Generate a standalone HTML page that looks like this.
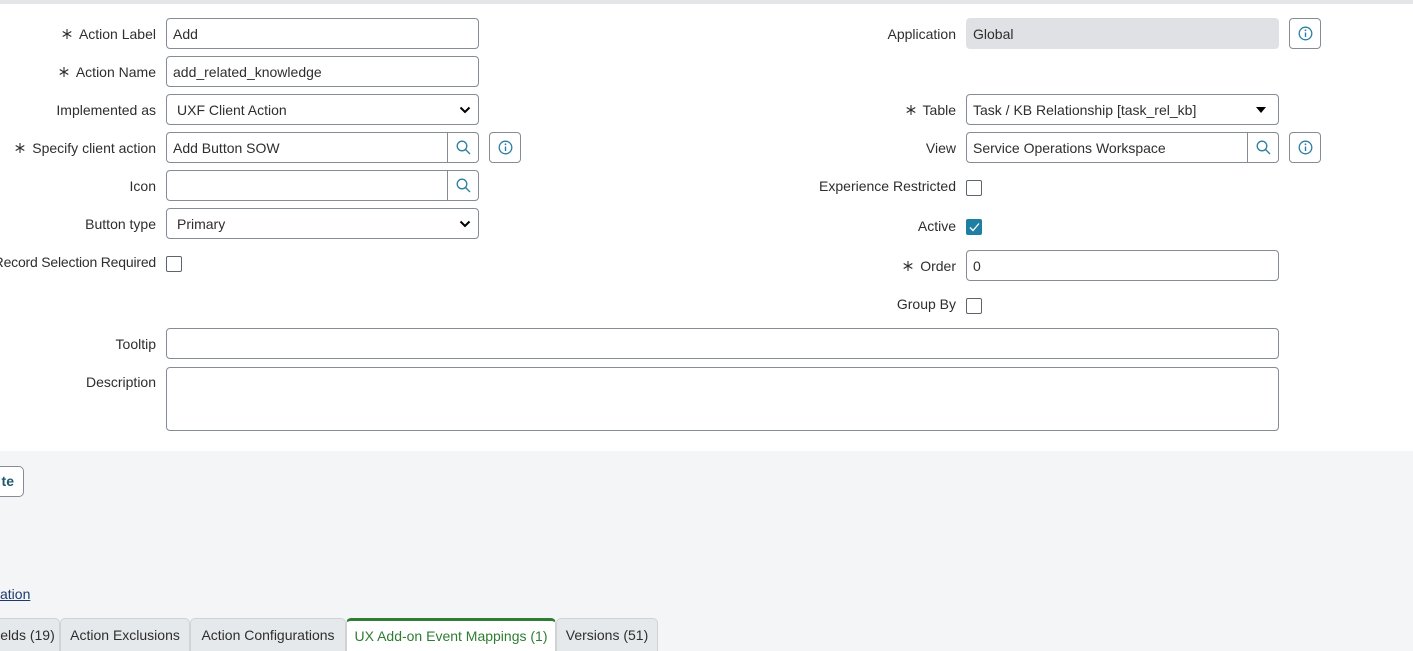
<!DOCTYPE html>
<html><head><style>
*{box-sizing:border-box;margin:0;padding:0}
body{width:1413px;height:651px;overflow:hidden;position:relative;background:#fff;font-family:"Liberation Sans",sans-serif;font-size:14px;color:#2e2e2e}
.top{position:absolute;left:0;top:0;width:1413px;height:4px;background:#e4e6e7}
.gray{position:absolute;left:0;top:451px;width:1413px;height:200px;background:#f4f5f7}
.lbl{position:absolute;text-align:right;white-space:nowrap;line-height:16px}
.lbl svg{margin-right:6px;vertical-align:-1px}
.in{position:absolute;height:31px;border:1px solid #868c94;border-radius:4px;background:#fff;padding:0 6px;line-height:30px;white-space:nowrap}
.ro{background:#dfe1e4;border-color:#dfe1e4}
.srch{position:absolute;top:0;right:0;width:31px;height:29px;border-left:1px solid #868c94}
.ib{position:absolute;width:32px;height:31px;border:1px solid #868c94;border-radius:4px;background:#fff}
.cb{position:absolute;width:16px;height:16px;border:1px solid #5f656d;border-radius:2px;background:#fff}
.tab{position:absolute;top:618px;height:33px;border:1px solid #cfd3d6;border-bottom:none;border-radius:5px 5px 0 0;background:#e6e9eb;line-height:32px;text-align:center;white-space:nowrap}
</style></head><body>
<svg width="0" height="0" style="position:absolute"><defs><symbol id="ast" viewBox="0 0 12 12"><path d="M6 1v10M1.7 3.5l8.6 5M1.7 8.5l8.6-5" stroke="#2e2e2e" stroke-width="1.1" fill="none"/></symbol></defs></svg>
<div class="top"></div>
<div class="gray"></div>

<div class="lbl" style="right:1257px;top:26px"><svg width="12" height="12"><use href="#ast"/></svg>Action Label</div>
<div class="in" style="left:166px;top:18px;width:313px">Add</div>
<div class="lbl" style="right:1257px;top:64px"><svg width="12" height="12"><use href="#ast"/></svg>Action Name</div>
<div class="in" style="left:166px;top:56px;width:313px">add_related_knowledge</div>
<div class="lbl" style="right:1257px;top:102px">Implemented as</div>
<div class="in" style="left:166px;top:94px;width:313px;padding-left:10px">UXF Client Action<svg style="position:absolute;right:7px;top:11px" width="12" height="8" viewBox="0 0 12 8"><path d="M1.5 1.5 6 6 10.5 1.5" fill="none" stroke="#000" stroke-width="2"/></svg></div>
<div class="lbl" style="right:1257px;top:140px"><svg width="12" height="12"><use href="#ast"/></svg>Specify client action</div>
<div class="in" style="left:166px;top:132px;width:313px">Add Button SOW<div class="srch"><svg style="position:absolute;left:8px;top:7px" width="15" height="15" viewBox="0 0 15 15"><circle cx="6" cy="6" r="4.8" fill="none" stroke="#2b7fa0" stroke-width="1.3"/><path d="M9.5 9.5 14 14" stroke="#2b7fa0" stroke-width="1.3"/></svg></div></div>
<div class="ib" style="left:489px;top:132px"><svg style="position:absolute;left:8px;top:7px" width="15" height="15" viewBox="0 0 15 15"><circle cx="7.5" cy="7.5" r="6.3" fill="none" stroke="#2b7fa0" stroke-width="1.3"/><path d="M7.5 6.5v4.5" stroke="#2b7fa0" stroke-width="1.4"/><circle cx="7.5" cy="4.3" r=".9" fill="#2b7fa0"/></svg></div>
<div class="lbl" style="right:1257px;top:178px">Icon</div>
<div class="in" style="left:166px;top:170px;width:313px"><div class="srch"><svg style="position:absolute;left:8px;top:7px" width="15" height="15" viewBox="0 0 15 15"><circle cx="6" cy="6" r="4.8" fill="none" stroke="#2b7fa0" stroke-width="1.3"/><path d="M9.5 9.5 14 14" stroke="#2b7fa0" stroke-width="1.3"/></svg></div></div>
<div class="lbl" style="right:1257px;top:216px">Button type</div>
<div class="in" style="left:166px;top:208px;width:313px;padding-left:10px">Primary<svg style="position:absolute;right:7px;top:11px" width="12" height="8" viewBox="0 0 12 8"><path d="M1.5 1.5 6 6 10.5 1.5" fill="none" stroke="#000" stroke-width="2"/></svg></div>
<div class="lbl" style="right:1257px;top:254px;letter-spacing:-0.2px">Record Selection Required</div>
<div class="cb" style="left:166px;top:256px"></div>

<div class="lbl" style="right:457px;top:26px">Application</div>
<div class="in ro" style="left:966px;top:18px;width:313px">Global</div>
<div class="ib" style="left:1289px;top:18px"><svg style="position:absolute;left:8px;top:7px" width="15" height="15" viewBox="0 0 15 15"><circle cx="7.5" cy="7.5" r="6.3" fill="none" stroke="#2b7fa0" stroke-width="1.3"/><path d="M7.5 6.5v4.5" stroke="#2b7fa0" stroke-width="1.4"/><circle cx="7.5" cy="4.3" r=".9" fill="#2b7fa0"/></svg></div>
<div class="lbl" style="right:457px;top:102px"><svg width="12" height="12"><use href="#ast"/></svg>Table</div>
<div class="in" style="left:966px;top:94px;width:313px">Task / KB Relationship [task_rel_kb]<svg style="position:absolute;right:12px;top:12px" width="10" height="6" viewBox="0 0 10 6"><path d="M0 0h10L5 6z" fill="#000"/></svg></div>
<div class="lbl" style="right:457px;top:140px">View</div>
<div class="in" style="left:966px;top:132px;width:313px">Service Operations Workspace<div class="srch"><svg style="position:absolute;left:8px;top:7px" width="15" height="15" viewBox="0 0 15 15"><circle cx="6" cy="6" r="4.8" fill="none" stroke="#2b7fa0" stroke-width="1.3"/><path d="M9.5 9.5 14 14" stroke="#2b7fa0" stroke-width="1.3"/></svg></div></div>
<div class="ib" style="left:1289px;top:132px"><svg style="position:absolute;left:8px;top:7px" width="15" height="15" viewBox="0 0 15 15"><circle cx="7.5" cy="7.5" r="6.3" fill="none" stroke="#2b7fa0" stroke-width="1.3"/><path d="M7.5 6.5v4.5" stroke="#2b7fa0" stroke-width="1.4"/><circle cx="7.5" cy="4.3" r=".9" fill="#2b7fa0"/></svg></div>
<div class="lbl" style="right:457px;top:178px">Experience Restricted</div>
<div class="cb" style="left:966px;top:180px"></div>
<div class="lbl" style="right:457px;top:218px">Active</div>
<div class="cb" style="left:966px;top:219px;background:#1f7fa3;border-color:#1f7fa3"><svg style="position:absolute;left:2px;top:2px" width="11" height="10" viewBox="0 0 11 10"><path d="M1 5.5 4 8.5 10 1.5" fill="none" stroke="#fff" stroke-width="1.3"/></svg></div>
<div class="lbl" style="right:457px;top:258px"><svg width="12" height="12"><use href="#ast"/></svg>Order</div>
<div class="in" style="left:966px;top:250px;width:313px">0</div>
<div class="lbl" style="right:457px;top:296px">Group By</div>
<div class="cb" style="left:966px;top:298px"></div>

<div class="lbl" style="right:1257px;top:336px">Tooltip</div>
<div class="in" style="left:166px;top:328px;width:1113px"></div>
<div class="lbl" style="right:1257px;top:374px">Description</div>
<div class="in" style="left:166px;top:367px;width:1113px;height:64px"></div>

<div style="position:absolute;left:-20px;top:466px;width:44px;height:31px;border:1px solid #868c94;border-radius:5px;background:#fff;line-height:29px;text-align:right;padding-right:9px;font-weight:bold;color:#1d5a6e">te</div>
<div style="position:absolute;left:0;top:585px;color:#1d3b6e;text-decoration:underline;line-height:18px">ation</div>

<div class="tab" style="left:-35px;width:95px;padding-left:30px">elds (19)</div>
<div class="tab" style="left:60px;width:130px">Action Exclusions</div>
<div class="tab" style="left:190px;width:156px">Action Configurations</div>
<div class="tab" style="left:346px;width:210px;background:#fff;border-top:3px solid #2e7d32;line-height:30px;color:#2e7d32">UX Add-on Event Mappings (1)</div>
<div class="tab" style="left:556px;width:102px">Versions (51)</div>
</body></html>
